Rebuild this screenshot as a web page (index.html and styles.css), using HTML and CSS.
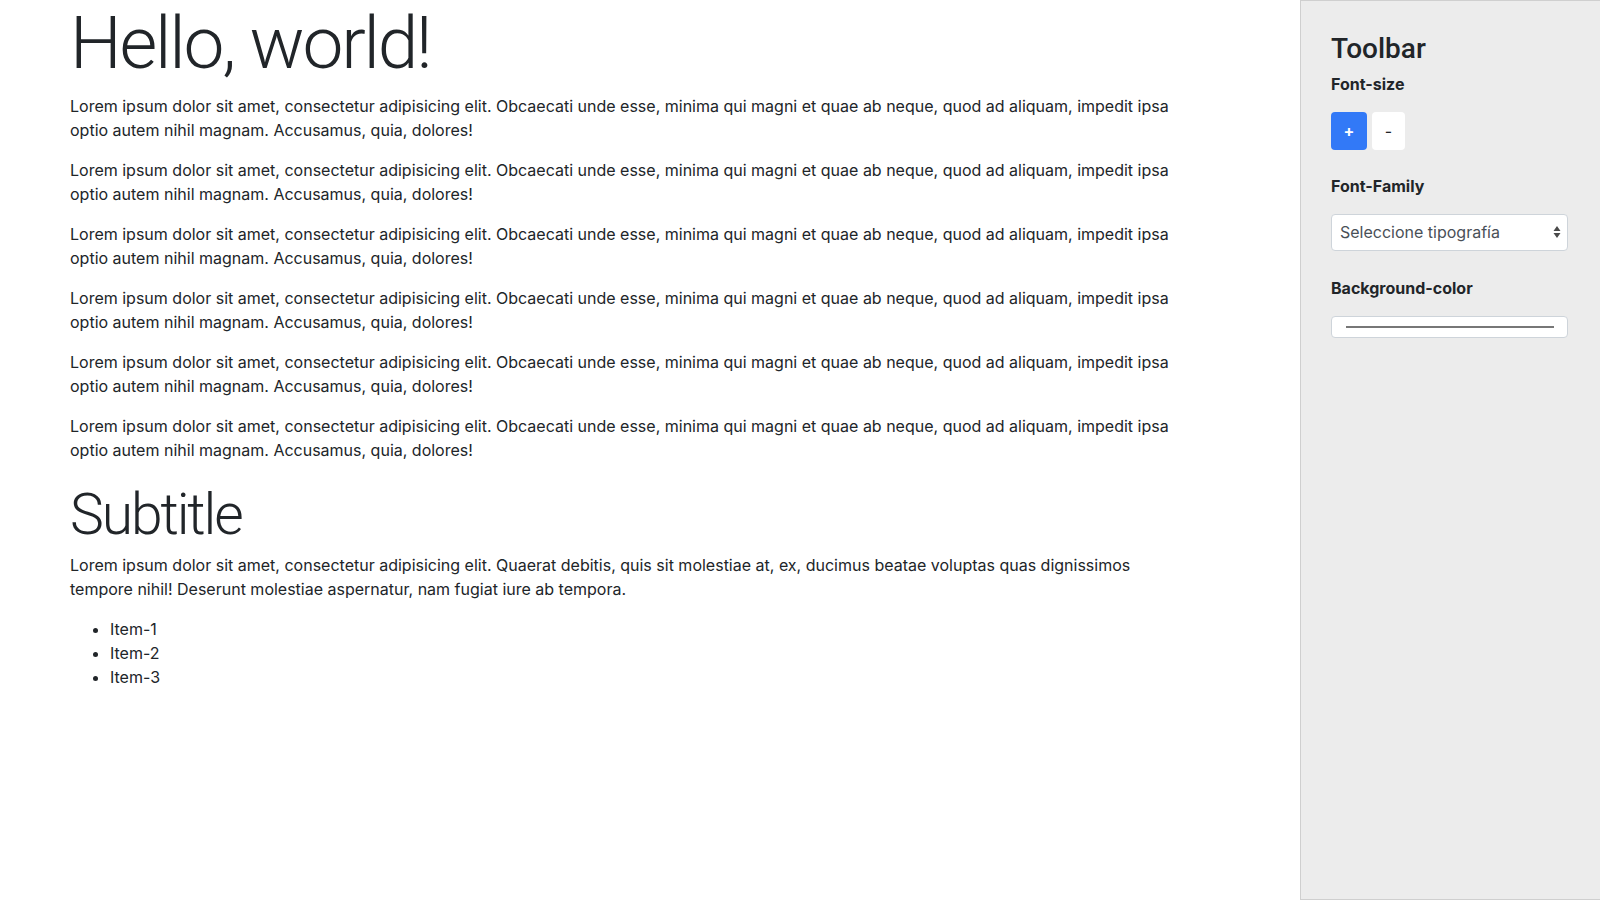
FILE: index.html
```html
<!DOCTYPE html>
<html lang="es">
<head>
<meta charset="utf-8">
<title>Toolbar demo</title>
<link rel="stylesheet" href="styles.css">
</head>
<body>
<div class="layout">
  <main class="content">
    <h1 class="title">Hello, world!</h1>
    <p>Lorem ipsum dolor sit amet, consectetur adipisicing elit. Obcaecati unde esse, minima qui magni et quae ab neque, quod ad aliquam, impedit ipsa optio autem nihil magnam. Accusamus, quia, dolores!</p>
    <p>Lorem ipsum dolor sit amet, consectetur adipisicing elit. Obcaecati unde esse, minima qui magni et quae ab neque, quod ad aliquam, impedit ipsa optio autem nihil magnam. Accusamus, quia, dolores!</p>
    <p>Lorem ipsum dolor sit amet, consectetur adipisicing elit. Obcaecati unde esse, minima qui magni et quae ab neque, quod ad aliquam, impedit ipsa optio autem nihil magnam. Accusamus, quia, dolores!</p>
    <p>Lorem ipsum dolor sit amet, consectetur adipisicing elit. Obcaecati unde esse, minima qui magni et quae ab neque, quod ad aliquam, impedit ipsa optio autem nihil magnam. Accusamus, quia, dolores!</p>
    <p>Lorem ipsum dolor sit amet, consectetur adipisicing elit. Obcaecati unde esse, minima qui magni et quae ab neque, quod ad aliquam, impedit ipsa optio autem nihil magnam. Accusamus, quia, dolores!</p>
    <p>Lorem ipsum dolor sit amet, consectetur adipisicing elit. Obcaecati unde esse, minima qui magni et quae ab neque, quod ad aliquam, impedit ipsa optio autem nihil magnam. Accusamus, quia, dolores!</p>
    <h2 class="subtitle">Subtitle</h2>
    <p>Lorem ipsum dolor sit amet, consectetur adipisicing elit. Quaerat debitis, quis sit molestiae at, ex, ducimus beatae voluptas quas dignissimos tempore nihil! Deserunt molestiae aspernatur, nam fugiat iure ab tempora.</p>
    <ul class="items">
      <li>Item-1</li>
      <li>Item-2</li>
      <li>Item-3</li>
    </ul>
  </main>
  <aside class="toolbar">
    <h3 class="toolbar-title">Toolbar</h3>
    <div class="group">
      <label class="group-label">Font-size</label>
      <div class="btn-row">
        <button class="btn btn-primary" type="button">+</button>
        <button class="btn btn-light" type="button">-</button>
      </div>
    </div>
    <div class="group group-select">
      <label class="group-label">Font-Family</label>
      <div class="select">
        <span class="select-text">Seleccione tipografía</span>
        <svg class="select-arrows" width="8" height="14" viewBox="0 0 8 14"><path d="M4 1 L7.5 6 H0.5 Z M4 13 L7.5 8 H0.5 Z" fill="#4a4a4a"/></svg>
      </div>
    </div>
    <div class="group">
      <label class="group-label">Background-color</label>
      <div class="color-input"><span class="color-swatch"></span></div>
    </div>
  </aside>
</div>
</body>
</html>
```

FILE: styles.css
```css
* { box-sizing: border-box; }
html, body { margin: 0; padding: 0; }
body {
  font-family: Inter, "Liberation Sans", Arial, sans-serif;
  font-size: 16px;
  line-height: 1.5;
  color: #212529;
  background: #fff;
}
.layout {
  display: flex;
  height: 900px;
}
.content {
  flex: 1;
  padding: 0 70px;
}
.content > * { max-width: 1110px; }
.title {
  font-family: Roboto, "Liberation Sans", sans-serif;
  font-size: 73px;
  font-weight: 300;
  line-height: 86px;
  margin: 0 0 8px;
  letter-spacing: -2.2px;
}
.content p {
  margin: 0 0 16px;
}
.subtitle {
  font-family: Roboto, "Liberation Sans", sans-serif;
  font-size: 57px;
  font-weight: 300;
  line-height: 1.2;
  margin: 19px 0 4px;
  letter-spacing: -2.1px;
}
.items {
  margin: 0;
  padding-left: 40px;
}
.toolbar {
  width: 300px;
  flex: none;
  background: #ececec;
  border: 1px solid #cfcfcf;
  border-right: none;
  padding: 31px 30px 30px;
}
.toolbar-title {
  font-family: Roboto, "Liberation Sans", sans-serif;
  margin: 0 0 6px;
  font-size: 28px;
  font-weight: 500;
  line-height: 1.2;
}
.group { margin-bottom: 24px; }
.group-select { margin-bottom: 25px; }
.group-label {
  display: block;
  font-weight: bold;
  margin-bottom: 16px;
}
.btn-row { display: flex; gap: 5px; }
.btn {
  font-family: inherit;
  font-size: 16px;
  line-height: 24px;
  padding: 7px 0;
  border: 0;
  border-radius: 4px;
  cursor: pointer;
  text-align: center;
}
.btn-primary { background: #3279f7; color: #fff; width: 36px; font-weight: bold; }
.btn-light { background: #fff; color: #212529; width: 33px; }
.select {
  display: flex;
  align-items: center;
  justify-content: space-between;
  width: 237px;
  height: 37px;
  background: #fff;
  border: 1px solid #ced4da;
  border-radius: 4px;
  padding: 0 6px 0 8px;
  color: #495057;
}
.color-input {
  display: flex;
  align-items: center;
  width: 237px;
  height: 22px;
  background: #fff;
  border: 1px solid #ced4da;
  border-radius: 4px;
  padding: 0 13px 0 14px;
}
.color-swatch {
  display: block;
  flex: 1;
  height: 2px;
  background: #777;
}
```
